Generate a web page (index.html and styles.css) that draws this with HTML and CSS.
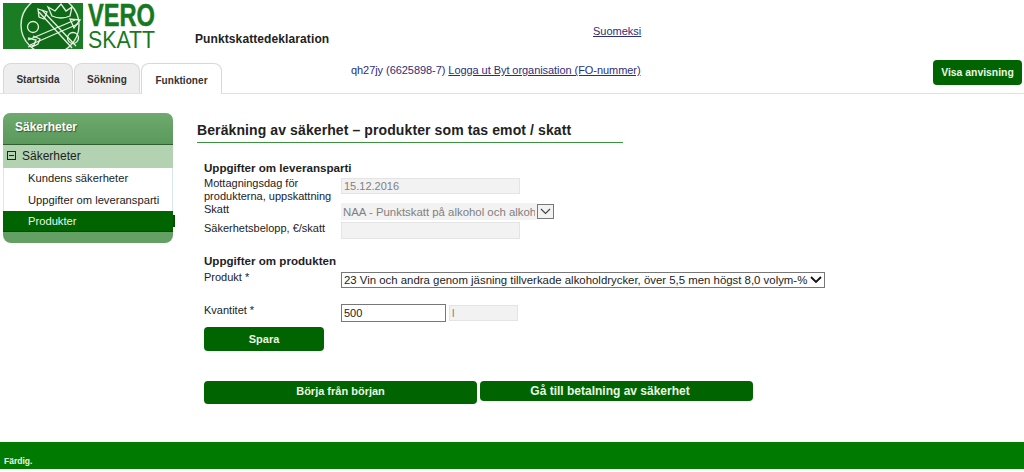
FILE: index.html
```html
<!DOCTYPE html>
<html lang="sv">
<head>
<meta charset="utf-8">
<title>Punktskattedeklaration</title>
<link rel="stylesheet" href="styles.css">
</head>
<body>
<header class="header">
  <div class="top">
    <svg class="logo" width="165" height="46" viewBox="0 0 165 46" aria-label="Vero Skatt">
      <defs><clipPath id="c"><rect width="80" height="46"/></clipPath></defs>
      <rect width="80" height="46" fill="#1a7d24"/>
      <g clip-path="url(#c)">
        <circle cx="47" cy="22" r="29" fill="#0f6a18" stroke="#dfeadb" stroke-width="1.4"/>
        <g fill="none" stroke="#e6f0e2" stroke-width="1.3">
          <path d="M36 9 L69 45 M39 7 L73 43"/>
          <path d="M35 6 L44 9 L41 16 L36 14 Z"/>
          <path d="M25 37 L72 17 M27 42 L75 21"/>
          <path d="M77 17 L67 16 L71 25 Z"/>
          <path d="M25 35 L33 37 L31 42 L25 44 M30 33 L37 36 L35 41 L29 44"/>
          <circle cx="30" cy="24" r="5.5"/>
          <circle cx="70" cy="35" r="5.5"/>
          <path d="M45 4 L49 13 Q58 17 67 13 L69 4 L63 8 L58 1 L52 8 Z"/>
        </g>
      </g>
      <text class="logo-vero" x="85" y="23" textLength="67" lengthAdjust="spacingAndGlyphs">VERO</text>
      <text class="logo-skatt" x="85" y="45" textLength="67" lengthAdjust="spacingAndGlyphs">SKATT</text>
    </svg>
    <div class="app-title">Punktskattedeklaration</div>
    <a class="link lang" href="#">Suomeksi</a>
  </div>
  <div class="navrow">
    <nav class="tabs">
      <a class="tab tab-start" href="#">Startsida</a>
      <a class="tab tab-search" href="#">Sökning</a>
      <a class="tab tab-active" href="#">Funktioner</a>
    </nav>
    <div class="user">qh27jy (6625898-7) <a class="link" href="#">Logga ut Byt organisation (FO-nummer)</a></div>
    <button class="btn btn-help" type="button">Visa anvisning</button>
  </div>
</header>

<div class="main">
  <aside class="side">
    <div class="side-head">Säkerheter</div>
    <div class="side-group"><span class="minus"></span>Säkerheter</div>
    <a class="side-item" href="#">Kundens säkerheter</a>
    <a class="side-item" href="#">Uppgifter om leveransparti</a>
    <a class="side-item side-current" href="#">Produkter</a>
    <div class="side-foot"></div>
  </aside>

  <section class="content">
    <h1 class="page-title">Beräkning av säkerhet – produkter som tas emot / skatt</h1>
    <form class="form">
      <h2 class="sec sec-first">Uppgifter om leveransparti</h2>
      <div class="row row-date">
        <label class="lab">Mottagningsdag för produkterna, uppskattning</label>
        <input class="ro ro-wide" value="15.12.2016" readonly>
      </div>
      <div class="row row-tax">
        <label class="lab">Skatt</label>
        <select class="tax" disabled><option>NAA - Punktskatt på alkohol och alkoholdrycker</option></select>
        <span class="tax-arrow"><svg width="11" height="7" viewBox="0 0 11 7"><path d="M1 1 L5.5 5.5 L10 1" fill="none" stroke="#444" stroke-width="1.2"/></svg></span>
      </div>
      <div class="row row-amount">
        <label class="lab">Säkerhetsbelopp, €/skatt</label>
        <input class="ro ro-wide" readonly>
      </div>

      <h2 class="sec sec-second">Uppgifter om produkten</h2>
      <div class="row row-product">
        <label class="lab">Produkt *</label>
        <span class="prod-wrap">
          <select class="prod"><option>23 Vin och andra genom jäsning tillverkade alkoholdrycker, över 5,5 men högst 8,0 volym-%</option></select>
          <svg class="prod-arrow" width="12" height="8" viewBox="0 0 12 8"><path d="M1 1 L6 6 L11 1" fill="none" stroke="#111" stroke-width="1.8"/></svg>
        </span>
      </div>
      <div class="row row-qty">
        <label class="lab">Kvantitet *</label>
        <input class="qty" value="500">
        <input class="ro unit" value="l" readonly>
      </div>
      <button class="btn btn-save" type="button">Spara</button>
      <div class="actions">
        <button class="btn btn-restart" type="button">Börja från början</button>
        <button class="btn btn-pay" type="button">Gå till betalning av säkerhet</button>
      </div>
    </form>
  </section>
</div>

<footer class="foot">Färdig.</footer>
</body>
</html>
```

FILE: styles.css
```css
* { box-sizing: border-box; }
html, body { margin: 0; padding: 0; }
body {
  width: 1024px;
  height: 472px;
  overflow: hidden;
  background: #fff;
  color: #222;
  font-family: "Liberation Sans", Arial, sans-serif;
  font-size: 11px;
}
.header { height: 94px; border-bottom: 1px solid #e2e2e2; }
.top { display: flex; height: 60px; padding: 3px 0 0 3px; }
.logo { flex: none; overflow: visible; }
.logo-vero { font: bold 32px "Liberation Sans Narrow", "Liberation Sans", sans-serif; fill: #17791f; stroke: #17791f; stroke-width: .5px; }
.logo-skatt { font: 23.5px "Liberation Sans", sans-serif; fill: #17791f; }
.app-title {
  margin: 29px 0 0 27px;
  width: 398px;
  font-size: 12px;
  font-weight: bold;
  letter-spacing: .1px;
  line-height: 14px;
  color: #222;
}
.link { color: #2e2e78; text-decoration: underline; }
.lang { margin-top: 21px; line-height: 14px; }

.navrow { display: flex; height: 33px; padding-left: 3px; }
.tabs { display: flex; gap: 1px; padding-top: 3px; height: 33px; width: 348px; }
.tab {
  display: flex;
  align-items: center;
  justify-content: center;
  height: 30px;
  padding-top: 2px;
  background: #eee;
  border: 1px solid #d8d8d8;
  border-bottom: 0;
  border-radius: 8px 8px 0 0;
  color: #333;
  font-size: 10px;
  font-weight: bold;
  text-decoration: none;
  letter-spacing: .05px;
}
.tab-start { width: 70px; }
.tab-search { width: 66px; }
.tab-active { width: 81px; background: #fff; height: 31px; }
.user { width: 582px; padding-top: 3px; color: #2e2e78; line-height: 14px; white-space: nowrap; letter-spacing: -.06px; }
.btn {
  display: block;
  padding: 0;
  border: 0;
  background: #006400;
  color: #eaf6e4;
  font-family: "Liberation Sans", Arial, sans-serif;
  font-weight: bold;
  font-size: 11px;
  border-radius: 4px;
}
.btn-help { width: 89px; height: 25px; font-size: 10.4px; }

.main { display: flex; height: 348px; }
.side { width: 170px; margin: 19px 0 0 3px; flex: none; }
.side-head {
  height: 32px;
  padding: 0 0 0 12px;
  line-height: 29px;
  font-size: 12px;
  background: linear-gradient(#6fa96f, #5b995b);
  border-bottom: 1px solid #2f5f2f;
  border-radius: 7px 7px 0 0;
  color: #fff;
  font-weight: bold;
  text-shadow: 1px 1px 1px #2d5a2d;
}
.side-group {
  display: flex;
  align-items: center;
  height: 23px;
  padding: 0 0 2px 4px;
  background: #b2d2b2;
  color: #222;
  font-size: 12px;
}
.minus {
  position: relative;
  width: 9px;
  height: 9px;
  margin-right: 6px;
  border: 1px solid #222;
}
.minus::after {
  content: "";
  position: absolute;
  left: 1px;
  right: 1px;
  top: 3px;
  height: 1px;
  background: #222;
}
.side-item {
  display: block;
  height: 21.5px;
  padding-left: 24px;
  line-height: 20px;
  font-size: 11.2px;
  background: #fff;
  border-left: 1px solid #d8e6f0;
  border-right: 1px solid #d8e6f0;
  color: #222;
  text-decoration: none;
  white-space: nowrap;
}
.side-current {
  position: relative;
  height: 21px;
  border: 0;
  padding-left: 25px;
  background: #006400;
  color: #eaf6e4;
  border-bottom: 1px solid #004c00;
}
.side-current::after {
  content: "";
  position: absolute;
  right: -2px;
  top: 4px;
  width: 2px;
  height: 12px;
  background: #004c00;
}
.side-foot { height: 11px; background: #64a064; border-radius: 0 0 8px 8px; }

.content { flex: 1; padding-left: 24px; }
.page-title {
  width: 426px;
  height: 22px;
  margin: 27px 0 0 0;
  border-bottom: 1px solid #3d923d;
  font-size: 14px;
  line-height: 18px;
  font-weight: bold;
  color: #222;
  white-space: nowrap;
  letter-spacing: .1px;
}
.form { padding-left: 7px; }
.sec { margin: 0; font-size: 11.6px; line-height: 14px; font-weight: bold; color: #222; }
.sec-first { margin-top: 18px; }
.sec-second { margin-top: 14px; }
.row { display: flex; align-items: flex-start; }
.lab { width: 137px; flex: none; line-height: 13px; color: #222; }
.ro {
  display: block;
  height: 16px;
  padding: 0 2px;
  background: #f2f2f2;
  border: 1px solid #e4e4e4;
  color: #808080;
  font: 11px "Liberation Sans", sans-serif;
}
.ro-wide { width: 179px; }
.row-date { height: 28px; }
.row-date .lab { margin-top: 2px; }
.row-date .ro { margin-top: 3px; }
.row-tax { height: 19px; }
.tax {
  appearance: none;
  width: 196px;
  height: 17px;
  padding: 0 2px;
  background: #f2f2f2;
  border: 0;
  border-radius: 0;
  color: #808080;
  opacity: 1;
  font: 11.4px "Liberation Sans", sans-serif;
}
.tax-arrow {
  display: flex;
  align-items: center;
  justify-content: center;
  width: 17px;
  height: 15px;
  margin-top: 1px;
  border: 1px solid #777;
  background: #f2f2f2;
}
.row-amount { height: 18px; }
.row-amount .ro { height: 17px; }
.row-product { height: 26px; margin-top: 4px; }
.row-product .lab { margin-top: -1px; }
.prod-wrap { position: relative; display: block; width: 484px; height: 16px; }
.prod {
  appearance: none;
  display: block;
  width: 484px;
  height: 16px;
  padding: 0 4px 0 2px;
  background: #fff;
  border: 1px solid #777;
  border-radius: 0;
  color: #222;
  font: 11.4px "Liberation Sans", sans-serif;
}
.prod-arrow { position: absolute; right: 3px; top: 4px; }
.row-qty { height: 23px; margin-top: 6px; }
.qty {
  width: 105px;
  height: 18px;
  padding: 0 2px;
  border: 1px solid #777;
  color: #222;
  font: 11px "Liberation Sans", sans-serif;
  background: #fff;
}
.unit { width: 69px; height: 16px; margin: 1px 0 0 3px; }
.btn-save { width: 120px; height: 24px; }
.actions { display: flex; gap: 3px; align-items: flex-start; margin-top: 30px; }
.btn-restart { width: 273px; height: 23px; padding-bottom: 4px; }
.btn-pay { width: 273px; height: 20px; padding-right: 13px; font-size: 12px; }
.foot {
  height: 27px;
  padding: 12px 0 0 4px;
  background: #007a00;
  color: #eaf6e4;
  font-size: 8.5px;
  font-weight: bold;
  line-height: 14px;
}
```
